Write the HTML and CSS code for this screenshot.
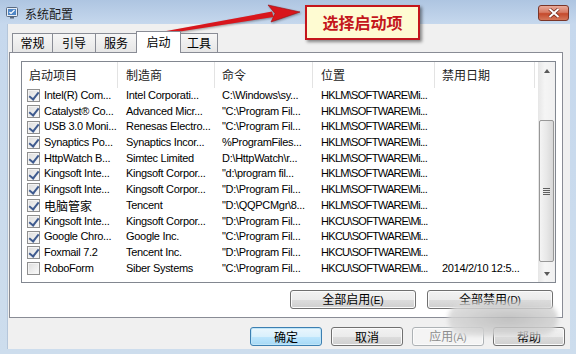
FILE: index.html
```html
<!DOCTYPE html>
<html lang="zh-CN">
<head>
    <meta charset="UTF-8">
    <title>系统配置</title>
    <link rel="stylesheet" href="styles.css">
</head>
<body>
    <div class="window">
        <div class="titlebar">
            <svg class="app-icon" width="12" height="12" viewBox="0 0 12 12">
                <rect x="0.5" y="0.5" width="11" height="9" rx="1" fill="#e8eef6" stroke="#5a6a80"/>
                <rect x="2" y="2" width="8" height="6" fill="#4f86c6"/>
                <path d="M3.5 5 L5 6.5 L8.5 3" stroke="#fff" stroke-width="1.2" fill="none"/>
                <rect x="4" y="10" width="4" height="1.5" fill="#5a6a80"/>
            </svg>
            <span class="title">系统配置</span>
            <div class="close">
                <svg width="12" height="10" viewBox="0 0 12 10">
                    <path d="M1.5 1 L10.5 9 M10.5 1 L1.5 9" stroke="#6b2618" stroke-width="3.4"/>
                    <path d="M1.5 1 L10.5 9 M10.5 1 L1.5 9" stroke="#fff" stroke-width="2"/>
                </svg>
            </div>
        </div>

        <div class="client">
            <div class="tabs">
                <div class="tab w40">常规</div>
                <div class="tab w43">引导</div>
                <div class="tab w41">服务</div>
                <div class="tab active">启动</div>
                <div class="tab w38">工具</div>
            </div>

            <div class="panel">
                <div class="list">
                    <div class="list-body">
                        <div class="row header">
                            <div class="cell c1 head">启动项目</div>
                            <div class="cell c2 head">制造商</div>
                            <div class="cell c3 head">命令</div>
                            <div class="cell c4 head">位置</div>
                            <div class="cell c5 head">禁用日期</div>
                        </div>
                        <div class="row">
                            <div class="cell c1"><span class="cb on"></span>Intel(R) Com...</div>
                            <div class="cell c2">Intel Corporati...</div>
                            <div class="cell c3">C:\Windows\sy...</div>
                            <div class="cell c4">HKLM\SOFTWARE\Mi...</div>
                            <div class="cell c5"></div>
                        </div>
                        <div class="row">
                            <div class="cell c1"><span class="cb on"></span>Catalyst® Co...</div>
                            <div class="cell c2">Advanced Micr...</div>
                            <div class="cell c3">"C:\Program Fil...</div>
                            <div class="cell c4">HKLM\SOFTWARE\Mi...</div>
                            <div class="cell c5"></div>
                        </div>
                        <div class="row">
                            <div class="cell c1"><span class="cb on"></span>USB 3.0 Moni...</div>
                            <div class="cell c2">Renesas Electro...</div>
                            <div class="cell c3">"C:\Program Fil...</div>
                            <div class="cell c4">HKLM\SOFTWARE\Mi...</div>
                            <div class="cell c5"></div>
                        </div>
                        <div class="row">
                            <div class="cell c1"><span class="cb on"></span>Synaptics Po...</div>
                            <div class="cell c2">Synaptics Incor...</div>
                            <div class="cell c3">%ProgramFiles...</div>
                            <div class="cell c4">HKLM\SOFTWARE\Mi...</div>
                            <div class="cell c5"></div>
                        </div>
                        <div class="row">
                            <div class="cell c1"><span class="cb on"></span>HttpWatch B...</div>
                            <div class="cell c2">Simtec Limited</div>
                            <div class="cell c3">D:\HttpWatch\r...</div>
                            <div class="cell c4">HKLM\SOFTWARE\Mi...</div>
                            <div class="cell c5"></div>
                        </div>
                        <div class="row">
                            <div class="cell c1"><span class="cb on"></span>Kingsoft Inte...</div>
                            <div class="cell c2">Kingsoft Corpor...</div>
                            <div class="cell c3">"d:\program fil...</div>
                            <div class="cell c4">HKLM\SOFTWARE\Mi...</div>
                            <div class="cell c5"></div>
                        </div>
                        <div class="row">
                            <div class="cell c1"><span class="cb on"></span>Kingsoft Inte...</div>
                            <div class="cell c2">Kingsoft Corpor...</div>
                            <div class="cell c3">"D:\Program Fil...</div>
                            <div class="cell c4">HKLM\SOFTWARE\Mi...</div>
                            <div class="cell c5"></div>
                        </div>
                        <div class="row">
                            <div class="cell c1"><span class="cb on"></span><span class="cjk">电脑管家</span></div>
                            <div class="cell c2">Tencent</div>
                            <div class="cell c3">"D:\QQPCMgr\8...</div>
                            <div class="cell c4">HKLM\SOFTWARE\Mi...</div>
                            <div class="cell c5"></div>
                        </div>
                        <div class="row">
                            <div class="cell c1"><span class="cb on"></span>Kingsoft Inte...</div>
                            <div class="cell c2">Kingsoft Corpor...</div>
                            <div class="cell c3">"D:\Program Fil...</div>
                            <div class="cell c4">HKCU\SOFTWARE\Mi...</div>
                            <div class="cell c5"></div>
                        </div>
                        <div class="row">
                            <div class="cell c1"><span class="cb on"></span>Google Chro...</div>
                            <div class="cell c2">Google Inc.</div>
                            <div class="cell c3">"C:\Program Fil...</div>
                            <div class="cell c4">HKCU\SOFTWARE\Mi...</div>
                            <div class="cell c5"></div>
                        </div>
                        <div class="row">
                            <div class="cell c1"><span class="cb on"></span>Foxmail 7.2</div>
                            <div class="cell c2">Tencent Inc.</div>
                            <div class="cell c3">"D:\Program Fil...</div>
                            <div class="cell c4">HKCU\SOFTWARE\Mi...</div>
                            <div class="cell c5"></div>
                        </div>
                        <div class="row">
                            <div class="cell c1"><span class="cb"></span>RoboForm</div>
                            <div class="cell c2">Siber Systems</div>
                            <div class="cell c3">"C:\Program Fil...</div>
                            <div class="cell c4">HKCU\SOFTWARE\Mi...</div>
                            <div class="cell c5">2014/2/10 12:5...</div>
                        </div>
                    </div>
                    <div class="scrollbar">
                        <div class="sb-btn"><span class="tri up"></span></div>
                        <div class="sb-gap"></div>
                        <div class="thumb"><span class="grip"></span></div>
                        <div class="sb-rest"></div>
                        <div class="sb-btn"><span class="tri down"></span></div>
                    </div>
                </div>

                <div class="panel-actions">
                    <button class="btn wide">全部启用<small>(E)</small></button>
                    <button class="btn wide">全部禁用<small>(D)</small></button>
                </div>
            </div>

            <div class="dialog-actions">
                <button class="btn default">确定</button>
                <button class="btn">取消</button>
                <button class="btn disabled">应用<small>(A)</small></button>
                <button class="btn">帮助</button>
            </div>
        </div>

        <!-- annotation drawn over the screenshot -->
        <svg class="arrow" width="310" height="44" viewBox="0 0 310 44">
            <polygon points="150,34 272,11.5 273.5,17 151,36" fill="#d8161c"/>
            <polygon points="268,5 300,12 271,22 275,13.5" fill="#d8161c" stroke="#9c0d10" stroke-width="0.6"/>
        </svg>
        <div class="callout">选择启动项</div>
        <div class="smudge"></div>
    </div>
</body>
</html>
```

FILE: styles.css
```css
*{
    margin: 0;
    padding: 0;
    box-sizing: border-box;
}
body{
    font-family: "Liberation Sans", "Noto Sans CJK SC", sans-serif;
    font-size: 11px;
    color: #000;
}
.window{
    position: relative;
    width: 576px;
    height: 354px;
    overflow: hidden;
    background: linear-gradient(180deg, #aec5e1 0, #c6d8ed 24px, #cddded 100%);
}

/* title bar */
.titlebar{
    display: flex;
    align-items: flex-start;
    height: 24px;
}
.app-icon{
    margin: 7px 0 0 6px;
}
.title{
    margin: 6px 0 0 7px;
    font-family: "Noto Sans CJK SC", sans-serif;
    font-size: 12px;
    line-height: 16px;
    color: #1b1b1b;
}
.close{
    display: flex;
    justify-content: center;
    align-items: center;
    width: 31px;
    height: 16px;
    margin: 5px 7px 0 auto;
    border: 1px solid #7a3528;
    border-radius: 3px;
    background: linear-gradient(180deg, #e9ab9b 0, #d77b64 45%, #c54a2c 55%, #d4775a 100%);
}

/* client area */
.client{
    display: flex;
    flex-direction: column;
    width: 563px;
    height: 325px;
    margin-left: 7px;
    padding-top: 7px;
    background: #f0f0f0;
    border-left: 1px solid #b5c6da;
}
.tabs{
    position: relative;
    z-index: 1;
    display: flex;
    align-items: flex-end;
    height: 22px;
    margin: 0 0 -1px 4px;
}
.tab{
    height: 19px;
    margin-bottom: 1px;
    border: 1px solid #898c95;
    border-bottom: none;
    border-right: none;
    background: linear-gradient(180deg, #f6f6f6, #e6e6e6);
    font-family: "Noto Sans CJK SC", sans-serif;
    font-size: 12px;
    line-height: 18px;
    text-align: center;
}
.w40{ width: 40px; }
.w43{ width: 43px; }
.w41{ width: 41px; }
.w38{ width: 38px; border-right: 1px solid #898c95; }
.tab.active{
    width: 45px;
    height: 22px;
    margin: 0 -1px 0 0;
    border-right: 1px solid #898c95;
    background: #fff;
    line-height: 19px;
}

.panel{
    width: 554px;
    height: 266px;
    margin-left: 1px;
    padding: 8px 6px 0 11px;
    border: 1px solid #898c95;
    background: #fff;
}

/* list view */
.list{
    display: flex;
    width: 535px;
    height: 222px;
    border: 1px solid #828790;
    background: #fff;
}
.list-body{
    flex: 1;
    overflow: hidden;
}
.row{
    display: flex;
    height: 15.7px;
    line-height: 15.7px;
    letter-spacing: -0.3px;
}
.row.header{
    height: 26px;
    line-height: 26px;
    letter-spacing: 0;
}
.cell{
    flex: none;
    overflow: hidden;
    white-space: nowrap;
    padding-left: 8px;
}
.c1{ width: 96px; display: flex; align-items: center; padding-left: 5px; }
.c2{ width: 97px; }
.c3{ width: 98px; padding-left: 7px; }
.c4{ width: 122px; letter-spacing: -0.7px; }
.c5{ width: 100px; padding-left: 7px; }
.head{
    font-family: "Noto Sans CJK SC", sans-serif;
    font-size: 12px;
    color: #222;
    letter-spacing: 0;
    border-right: 1px solid #e3e3e3;
}
.c1.head{ padding-left: 7px; }
.cjk{
    font-family: "Noto Sans CJK SC", sans-serif;
    font-size: 12px;
    letter-spacing: 0;
}
.cb{
    position: relative;
    flex: none;
    width: 13px;
    height: 13px;
    margin-right: 4px;
    border: 1px solid #8f8f8f;
    background: linear-gradient(135deg, #dcdcdc, #fbfbfb);
    box-shadow: inset 0 0 0 1px #f4f4f4;
}
.cb.on::after{
    content: "";
    position: absolute;
    left: 3px;
    top: 0;
    width: 4px;
    height: 8px;
    border: solid #3f5b8f;
    border-width: 0 2px 2px 0;
    transform: rotate(38deg);
}

/* scrollbar */
.scrollbar{
    display: flex;
    flex-direction: column;
    width: 17px;
    background: linear-gradient(90deg, #e6e6e6, #f5f5f5 40%, #f0f0f0);
}
.sb-btn{
    display: flex;
    justify-content: center;
    align-items: center;
    height: 17px;
}
.tri{
    width: 0;
    height: 0;
    border-left: 3.5px solid transparent;
    border-right: 3.5px solid transparent;
}
.tri.up{ border-bottom: 4px solid #5a5a5a; }
.tri.down{ border-top: 4px solid #5a5a5a; }
.sb-gap{ height: 41px; }
.thumb{
    display: flex;
    justify-content: center;
    align-items: center;
    height: 142px;
    margin: 0 1px;
    border: 1px solid #979797;
    border-radius: 2px;
    background: linear-gradient(90deg, #f4f4f4, #e8e8e8 50%, #d8d8d8);
}
.grip{
    width: 7px;
    height: 7px;
    background: repeating-linear-gradient(180deg, #5f5f5f 0 1px, transparent 1px 2px);
}
.sb-rest{ flex: 1; }

/* buttons */
.panel-actions{
    display: flex;
    justify-content: flex-end;
    gap: 11px;
    margin: 7px 3px 0 0;
}
.dialog-actions{
    display: flex;
    justify-content: flex-end;
    gap: 9px;
    margin: 9px 5px 0 0;
}
.btn{
    width: 72px;
    height: 19px;
    border: 1px solid #707070;
    border-radius: 3px;
    background: linear-gradient(180deg, #f2f2f2 0, #ebebeb 50%, #dddddd 51%, #cfcfcf 100%);
    box-shadow: inset 0 0 0 1px #fbfbfb;
    font-family: "Noto Sans CJK SC", sans-serif;
    font-size: 12px;
    line-height: 16px;
    color: #000;
}
.btn small{
    font-family: "Liberation Sans", sans-serif;
    font-size: 10px;
}
.btn.wide{ width: 126px; }
.btn.default{
    border-color: #3c7fb1;
    background: linear-gradient(180deg, #eaf6fd 0, #d9f0fc 50%, #bee6fd 51%, #a7d9f5 100%);
    box-shadow: inset 0 0 0 1px #bfe5f8;
}
.btn.disabled{
    border-color: #adb2b5;
    background: #f4f4f4;
    color: #8d8d8d;
}

/* annotation overlays */
.arrow{
    position: absolute;
    left: 0;
    top: 0;
    filter: drop-shadow(1px 1px 1px rgba(0, 0, 0, .35));
}
.callout{
    position: absolute;
    left: 305px;
    top: 5px;
    width: 115px;
    height: 35px;
    border: 2px solid #c4161c;
    background: #fefbd2;
    box-shadow: 2px 2px 3px rgba(0, 0, 0, .45);
    font-family: "Noto Sans CJK SC", sans-serif;
    font-size: 16px;
    font-weight: bold;
    line-height: 31px;
    text-align: center;
    color: #c4161c;
}
.smudge{
    position: absolute;
    left: 448px;
    top: 302px;
    width: 110px;
    height: 34px;
    border-radius: 17px;
    background: radial-gradient(ellipse at 55% 50%, #b9b9b9, #d6d6d6 70%, #e6e6e6);
    filter: blur(2px);
    opacity: .85;
}
```
